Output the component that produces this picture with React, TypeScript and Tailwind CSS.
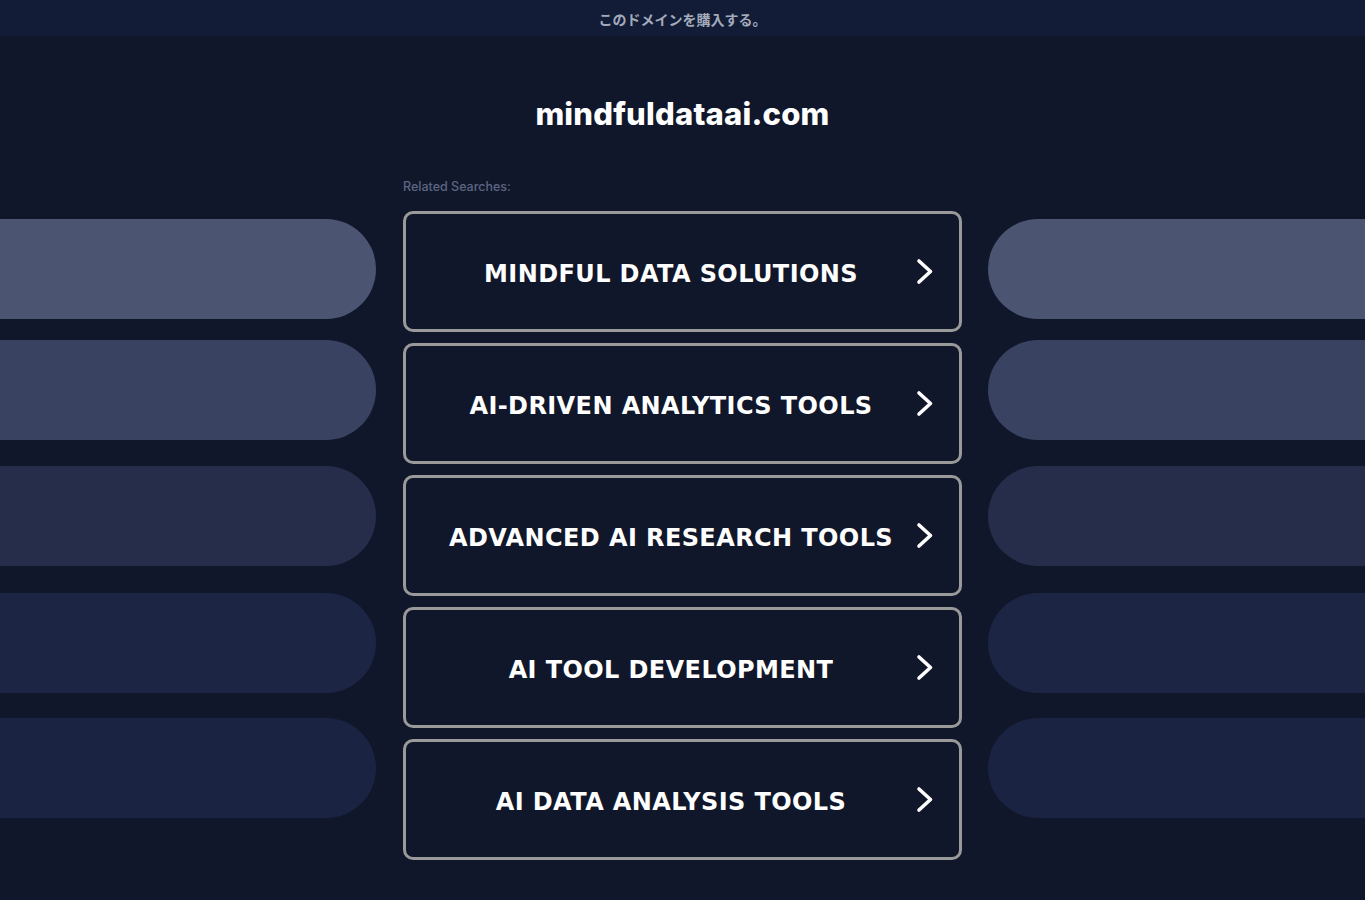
const searches = [
  "MINDFUL DATA SOLUTIONS",
  "AI-DRIVEN ANALYTICS TOOLS",
  "ADVANCED AI RESEARCH TOOLS",
  "AI TOOL DEVELOPMENT",
  "AI DATA ANALYSIS TOOLS",
];

// decorative side pills: colour + spacing above each one
const pills = [
  { bg: "bg-[#4b5572]", mt: "mt-0" },
  { bg: "bg-[#394260]", mt: "mt-[21px]" },
  { bg: "bg-[#252d4a]", mt: "mt-[26px]" },
  { bg: "bg-[#1c2544]", mt: "mt-[27px]" },
  { bg: "bg-[#1a2342]", mt: "mt-[25px]" },
];

function Chevron() {
  return (
    <svg width="18" height="27" viewBox="0 0 18 27" fill="none" aria-hidden="true">
      <polyline
        points="3,3 14.5,13.5 3,24"
        stroke="white"
        strokeWidth="3.6"
        strokeLinecap="round"
        strokeLinejoin="round"
      />
    </svg>
  );
}

function PillColumn({ side }: { side: "left" | "right" }) {
  return (
    <div className="flex flex-col pt-[42px]">
      {pills.map((p, i) => (
        <div
          key={i}
          className={`h-[100px] ${p.mt} ${p.bg} ${side === "left" ? "rounded-r-[50px]" : "rounded-l-[50px]"}`}
        />
      ))}
    </div>
  );
}

export default function App() {
  return (
    <div className="min-h-[900px] bg-[#11172a] font-['Inter',sans-serif]">
      <div className="flex h-[36px] items-center justify-center bg-[#121c37] pt-[3px] text-[14px] font-bold text-[#a3abbb] font-['Noto_Sans_CJK_JP',sans-serif]">
        このドメインを購入する。
      </div>

      <h1 className="mt-[59px] text-center text-[31px] font-extrabold leading-[38px] tracking-[0.2px] text-white font-['Inter',sans-serif]">
        mindfuldataai.com
      </h1>

      <div className="mt-[44px] grid grid-cols-[376px_559px_1fr] gap-x-[27px]">
        <PillColumn side="left" />

        <div className="flex flex-col">
          <p className="h-[34px] pt-[1px] text-[12.5px] font-medium text-[#5c6582]">Related Searches:</p>
          <div className="flex flex-col gap-[11px]">
            {searches.map((s) => (
              <a
                key={s}
                href="#"
                className="flex h-[121px] items-center rounded-[10px] border-[3px] border-[#9a9a9a] pl-[20px] pr-[25px]"
              >
                <span className="flex-1 pt-[4px] text-center text-[24px] font-bold tracking-[0.4px] text-white font-['DejaVu_Sans',sans-serif]">
                  {s}
                </span>
                <Chevron />
              </a>
            ))}
          </div>
        </div>

        <div className="-ml-px">
          <PillColumn side="right" />
        </div>
      </div>
    </div>
  );
}
